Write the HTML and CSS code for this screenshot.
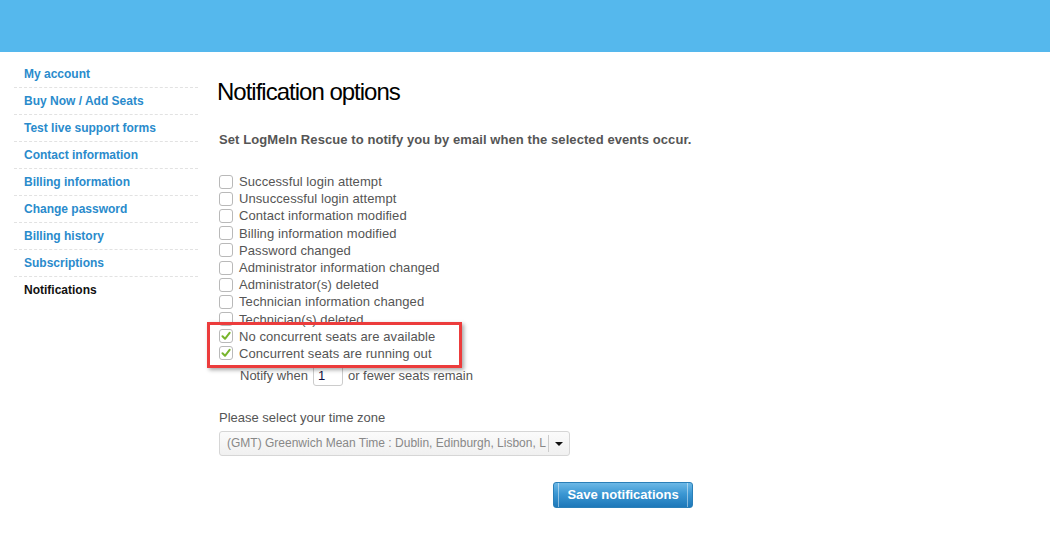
FILE: index.html
```html
<!DOCTYPE html>
<html>

<head>
    <meta name="viewport" content="width=device-width, initial-scale=1">
    <link rel="icon" href="data:,">
    <link rel="stylesheet" href="styles.css">
</head>

<body>
    <!-- Barra superior -->
    <div class="topbar"></div>

    <div class="page">
        <!-- Menu lateral -->
        <div class="sidebar">
            <a href="#">My account</a>
            <a href="#">Buy Now / Add Seats</a>
            <a href="#">Test live support forms</a>
            <a href="#">Contact information</a>
            <a href="#">Billing information</a>
            <a href="#">Change password</a>
            <a href="#">Billing history</a>
            <a href="#">Subscriptions</a>
            <a href="#" class="active">Notifications</a>
        </div>

        <!-- Contenido principal -->
        <div class="main">
            <h1>Notification options</h1>
            <p class="intro">Set LogMeIn Rescue to notify you by email when the selected events occur.</p>

            <div class="events">
                <label class="event"><span class="box"></span>Successful login attempt</label>
                <label class="event"><span class="box"></span>Unsuccessful login attempt</label>
                <label class="event"><span class="box"></span>Contact information modified</label>
                <label class="event"><span class="box"></span>Billing information modified</label>
                <label class="event"><span class="box"></span>Password changed</label>
                <label class="event"><span class="box"></span>Administrator information changed</label>
                <label class="event"><span class="box"></span>Administrator(s) deleted</label>
                <label class="event"><span class="box"></span>Technician information changed</label>
                <label class="event"><span class="box"></span>Technician(s) deleted</label>
                <div class="marked">
                    <label class="event"><span class="box"><svg width="10" height="10" viewBox="0 0 10 10"><path d="M1.5 5.2 L4 7.8 L8.6 1.8" fill="none" stroke="#78b52c" stroke-width="2" stroke-linecap="round" stroke-linejoin="round"/></svg></span>No concurrent seats are available</label>
                    <label class="event"><span class="box"><svg width="10" height="10" viewBox="0 0 10 10"><path d="M1.5 5.2 L4 7.8 L8.6 1.8" fill="none" stroke="#78b52c" stroke-width="2" stroke-linecap="round" stroke-linejoin="round"/></svg></span>Concurrent seats are running out</label>
                    <span class="highlight"></span>
                </div>
                <div class="notify">Notify when <span class="seats">1</span> or fewer seats remain</div>
            </div>

            <div class="tz-label">Please select your time zone</div>
            <div class="select">
                <span class="select-text">(GMT) Greenwich Mean Time : Dublin, Edinburgh, Lisbon, L</span>
                <span class="select-arrow"></span>
            </div>

            <button class="save"><span>Save notifications</span></button>
        </div>
    </div>
</body>

</html>
```

FILE: styles.css
```css
/* Estilos de la pagina de notificaciones */
body {
    font-family: "Liberation Sans", Arial, sans-serif;
    margin: 0;
    color: #555;
}

.topbar {
    height: 52px;
    background-color: #55b8ed;
}

.page {
    display: flex;
}

.sidebar {
    width: 184px;
    margin-left: 14px;
    padding-top: 9px;
}

.sidebar a {
    display: block;
    height: 26px;
    line-height: 27px;
    padding-left: 10px;
    font-size: 12px;
    font-weight: bold;
    color: #2a8bcc;
    text-decoration: none;
    border-bottom: 1px dashed #e2e2e2;
}

.sidebar a.active {
    color: #111;
    border-bottom: none;
}

.main {
    margin-left: 20px;
    padding-top: 26px;
}

h1 {
    margin: 0 0 0 -1px;
    font-size: 24px;
    font-weight: normal;
    letter-spacing: -1px;
    line-height: 28px;
    color: #000;
}

.intro {
    margin: 26px 0 0 1px;
    font-size: 13px;
    font-weight: bold;
    line-height: 16px;
    letter-spacing: 0.08px;
}

.events {
    margin-top: 25px;
    margin-left: 1px;
}

.event {
    display: flex;
    align-items: center;
    height: 17.2px;
    font-size: 13px;
    letter-spacing: 0.08px;
    white-space: nowrap;
}

.box {
    width: 12px;
    height: 12px;
    border: 1px solid #b9b9b9;
    border-radius: 3px;
    margin-right: 6px;
    display: flex;
    align-items: center;
    justify-content: center;
    background: #fff;
}

.marked {
    position: relative;
}

.highlight {
    position: absolute;
    left: -12px;
    top: -6px;
    width: 249px;
    height: 40px;
    border: 3px solid #ec3c3c;
    box-shadow: 2px 2px 4px rgba(0, 0, 0, 0.35);
}

.notify {
    display: flex;
    align-items: center;
    margin-top: 3px;
    padding-left: 21px;
    font-size: 13px;
}

.seats {
    width: 24px;
    height: 19px;
    line-height: 19px;
    margin: 0 5px 0 5px;
    padding-left: 4px;
    border: 1px solid #ccc;
    border-radius: 3px;
    color: #111142;
}

.tz-label {
    margin-top: 24px;
    margin-left: 1px;
    font-size: 13px;
}

.select {
    display: flex;
    align-items: center;
    width: 349px;
    height: 23px;
    margin-top: 6px;
    margin-left: 1px;
    border: 1px solid #d6d6d6;
    border-radius: 3px;
    background: linear-gradient(#fbfbfb, #f0f0f0);
}

.select-text {
    flex: 1;
    padding-left: 7px;
    font-size: 12px;
    color: #888;
    white-space: nowrap;
    overflow: hidden;
    border-right: 1px solid #ccc;
    line-height: 17px;
}

.select-arrow {
    width: 20px;
    display: flex;
    justify-content: center;
}

.select-arrow::after {
    content: "";
    border-left: 4px solid transparent;
    border-right: 4px solid transparent;
    border-top: 4px solid #111;
}

.save {
    display: block;
    margin: 26px 0 0 335px;
    width: 140px;
    height: 26px;
    padding: 0 4px;
    border: 1px solid #2a7fb8;
    border-radius: 3px;
    background: linear-gradient(#6cb8e6, #3b97d3 45%, #1d78b9);
    color: #fff;
    font-family: "Liberation Sans", Arial, sans-serif;
    font-size: 13px;
    font-weight: bold;
    cursor: pointer;
}

.save span {
    display: block;
    height: 24px;
    line-height: 23px;
    border-left: 1px solid rgba(255, 255, 255, 0.45);
    border-right: 1px solid rgba(255, 255, 255, 0.45);
}
```
